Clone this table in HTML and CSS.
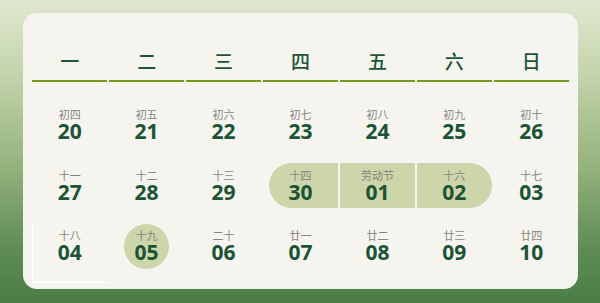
FILE: index.html
```html
<!DOCTYPE html>
<html lang="zh-CN">
<head>
<meta charset="utf-8">
<link rel="stylesheet" href="styles.css">
</head>
<body>
<div class="page">
  <div class="card">
    <div class="grid">
      <div class="wd">一</div><div class="wd">二</div><div class="wd">三</div><div class="wd">四</div><div class="wd">五</div><div class="wd">六</div><div class="wd">日</div>

      <div class="day"><span class="lunar">初四</span><span class="num">20</span></div>
      <div class="day"><span class="lunar">初五</span><span class="num">21</span></div>
      <div class="day"><span class="lunar">初六</span><span class="num">22</span></div>
      <div class="day"><span class="lunar">初七</span><span class="num">23</span></div>
      <div class="day"><span class="lunar">初八</span><span class="num">24</span></div>
      <div class="day"><span class="lunar">初九</span><span class="num">25</span></div>
      <div class="day"><span class="lunar">初十</span><span class="num">26</span></div>

      <div class="day"><span class="lunar">十一</span><span class="num">27</span></div>
      <div class="day"><span class="lunar">十二</span><span class="num">28</span></div>
      <div class="day"><span class="lunar">十三</span><span class="num">29</span></div>
      <div class="day range range-start"><span class="lunar">十四</span><span class="num">30</span></div>
      <div class="day range"><span class="lunar">劳动节</span><span class="num">01</span></div>
      <div class="day range range-end"><span class="lunar">十六</span><span class="num">02</span></div>
      <div class="day"><span class="lunar">十七</span><span class="num">03</span></div>

      <div class="day marked"><span class="lunar">十八</span><span class="num">04</span></div>
      <div class="day"><span class="circle"><span class="lunar">十九</span><span class="num">05</span></span></div>
      <div class="day"><span class="lunar">二十</span><span class="num">06</span></div>
      <div class="day"><span class="lunar">廿一</span><span class="num">07</span></div>
      <div class="day"><span class="lunar">廿二</span><span class="num">08</span></div>
      <div class="day"><span class="lunar">廿三</span><span class="num">09</span></div>
      <div class="day"><span class="lunar">廿四</span><span class="num">10</span></div>
    </div>
  </div>
</div>
</body>
</html>
```

FILE: styles.css
```css
* { box-sizing: border-box; }
html, body { margin: 0; padding: 0; }
body {
  width: 600px;
  height: 303px;
  overflow: hidden;
  font-family: "Noto Sans", "Noto Sans CJK SC", sans-serif;
}
.page {
  width: 600px;
  height: 303px;
  padding: 13px 22px 14px 23px;
  background: linear-gradient(180deg, #e0e7cf 0%, #c3d4ab 25%, #94b27c 55%, #5f8c55 82%, #4b7d46 100%);
}
.card {
  height: 276px;
  background: #f5f4ef;
  border-radius: 14px;
  padding: 0 9px 20px 9px;
}
.grid {
  display: grid;
  grid-template-columns: repeat(7, 1fr);
  column-gap: 1.5px;
  row-gap: 15.5px;
}
.wd {
  height: 69px;
  padding-top: 36px;
  line-height: 24px;
  font-size: 19px;
  text-align: center;
  color: #1d5536;
  font-family: "Noto Sans CJK SC", sans-serif;
  font-weight: 500;
  border-bottom: 2px solid #789a1c;
  margin-bottom: 5px;
}
.day {
  height: 45px;
  display: flex;
  flex-direction: column;
  align-items: center;
  justify-content: center;
  position: relative;
}
.lunar {
  display: block;
  font-family: "Noto Sans CJK SC", sans-serif;
  font-size: 11px;
  line-height: 12px;
  height: 12px;
  color: #86867f;
}
.num {
  display: block;
  font-family: "Noto Sans", sans-serif;
  font-size: 21px;
  line-height: 22px;
  height: 22px;
  font-weight: 700;
  color: #1b5334;
}
.range {
  background: #cdd5aa;
}
.range-start {
  margin-left: 6px;
  padding-right: 6px;
  border-radius: 23px 0 0 23px;
}
.range-end {
  border-radius: 0 23px 23px 0;
}
.circle {
  width: 45px;
  height: 45px;
  border-radius: 50%;
  background: #cdd5aa;
  display: flex;
  flex-direction: column;
  align-items: center;
  justify-content: center;
}
.marked::after {
  content: "";
  position: absolute;
  left: 0;
  top: -1px;
  width: 76px;
  height: 59px;
  border-left: 1.5px solid #ffffff;
  border-bottom: 1.5px solid #ffffff;
  pointer-events: none;
}
```
